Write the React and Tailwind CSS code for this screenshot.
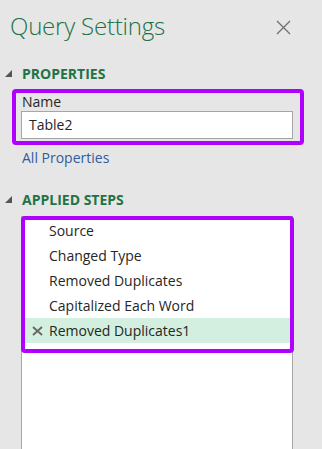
import React from "react";

const steps = [
  { name: "Source" },
  { name: "Changed Type" },
  { name: "Removed Duplicates" },
  { name: "Capitalized Each Word" },
  { name: "Removed Duplicates1", selected: true },
];

const Caret = () => (
  <svg width="7" height="7" viewBox="0 0 7 7" className="shrink-0">
    <polygon points="7,0 7,7 0,7" fill="#555" />
  </svg>
);

const App = () => {
  return (
    <div className="w-[322px] h-[449px] overflow-hidden bg-[#e6e6e6] font-['Open_Sans',sans-serif] text-[#262626]">
      {/* Title */}
      <div className="flex items-start justify-between pl-[10px] pr-[31px] pt-[10px] h-[61px]">
        <h1 className="text-[24px] leading-[32px] font-light text-[#217346] tracking-[-0.2px]">
          Query Settings
        </h1>
        <svg width="15" height="15" viewBox="0 0 15 15" className="mt-[10px]">
          <path d="M1 1L14 14M14 1L1 14" stroke="#707070" strokeWidth="1.3" />
        </svg>
      </div>

      {/* Properties */}
      <div className="flex items-center gap-[10px] pl-[5px] h-[24px]">
        <Caret />
        <span className="text-[14px] font-bold text-[#217346]">PROPERTIES</span>
      </div>
      <div className="mt-[4px] ml-[12px] w-[292px] h-[56px] border-4 border-[#b000ff] rounded-[4px] pl-[5px]">
        <div className="pl-[1px] text-[14px] leading-[18px]">Name</div>
        <div className="w-[272px] h-[28px] bg-white border border-[#a6a6a6] px-[7px] text-[14px] leading-[26px]">
          Table2
        </div>
      </div>
      <div className="pl-[22px] mt-[3px] text-[14px] leading-[20px] text-[#2e5d9b]">All Properties</div>

      {/* Applied steps */}
      <div className="mt-[19px] flex items-center gap-[10px] pl-[5px] h-[24px]">
        <Caret />
        <span className="text-[14px] font-bold text-[#217346]">APPLIED STEPS</span>
      </div>
      <div className="relative mt-[5px] ml-[21px] w-[272px] h-[250px] bg-white border border-[#a6a6a6] pt-[1px] px-[1px]">
        {steps.map((s) => (
          <div
            key={s.name}
            className={`flex items-center h-[25px] text-[14px] ${s.selected ? "bg-[#d3efdf]" : ""}`}
          >
            <div className="w-[26px] flex justify-center pl-[3px]">
              {s.selected && (
                <svg width="11" height="10" viewBox="0 0 11 10">
                  <path d="M1 1L10 9M10 1L1 9" stroke="#666" strokeWidth="1.8" />
                </svg>
              )}
            </div>
            <span>{s.name}</span>
          </div>
        ))}
        {/* highlight overlay */}
        <div className="absolute -left-px -top-px w-[273px] h-[137px] border-4 border-[#b000ff] rounded-[4px]" />
      </div>
    </div>
  );
};

export default App;
